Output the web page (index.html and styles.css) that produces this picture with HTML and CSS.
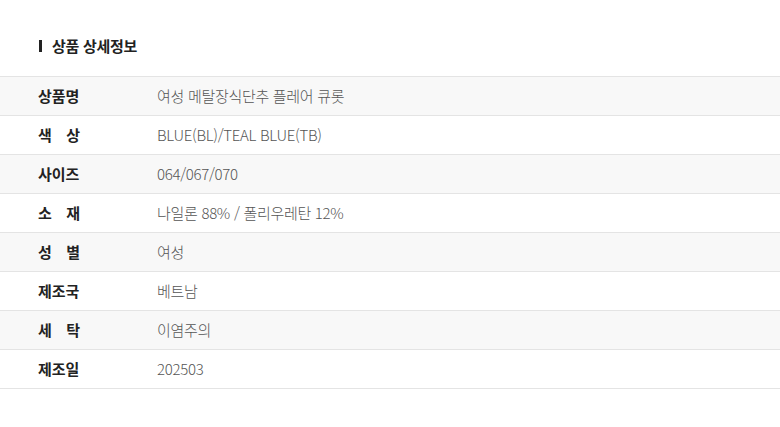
FILE: index.html
```html
<!DOCTYPE html>
<html lang="ko">
    <head>
        <meta charset="UTF-8">
        <title>상품 상세정보</title>
        <link rel="stylesheet" href="styles.css">
    </head>
    <body>
        <div class="detail">
            <h2 class="detail-title">상품 상세정보</h2>
            <table class="info-table">
                <tr><th><span>상품명</span></th><td>여성 메탈장식단추 플레어 큐롯</td></tr>
                <tr><th><span>색 상</span></th><td>BLUE(BL)/TEAL BLUE(TB)</td></tr>
                <tr><th><span>사이즈</span></th><td>064/067/070</td></tr>
                <tr><th><span>소 재</span></th><td>나일론 88% / 폴리우레탄 12%</td></tr>
                <tr><th><span>성 별</span></th><td>여성</td></tr>
                <tr><th><span>제조국</span></th><td>베트남</td></tr>
                <tr><th><span>세 탁</span></th><td>이염주의</td></tr>
                <tr><th><span>제조일</span></th><td>202503</td></tr>
            </table>
        </div>
    </body>
</html>
```

FILE: styles.css
```css
body {
    margin: 0;
    background: #fff;
    font-family: 'Noto Sans CJK KR', 'Noto Sans', sans-serif;
    color: #222;
}
.detail {
    padding-top: 36px;
}
.detail-title {
    display: flex;
    align-items: center;
    gap: 10px;
    margin: 0 0 21px 39px;
    font-size: 15px;
    font-weight: 700;
    line-height: 19px;
    letter-spacing: -0.3px;
}
.detail-title::before {
    content: "";
    width: 3px;
    height: 12px;
    background: #222;
}
.info-table {
    width: 100%;
    border-collapse: collapse;
    border-top: 1px solid #e4e4e4;
}
.info-table tr {
    border-bottom: 1px solid #e4e4e4;
}
.info-table tr:nth-child(odd) {
    background: #f8f8f8;
}
.info-table th,
.info-table td {
    height: 39px;
    padding: 0 0 2px;
    box-sizing: border-box;
    font-size: 15px;
    text-align: left;
    vertical-align: middle;
}
.info-table th {
    width: 157px;
    padding-left: 38px;
    font-weight: 700;
    color: #222;
}
.info-table th span {
    display: inline-block;
    width: 42px;
    text-align: justify;
    text-align-last: justify;
}
.info-table td {
    font-weight: 300;
    color: #555;
    letter-spacing: -0.3px;
}
```
